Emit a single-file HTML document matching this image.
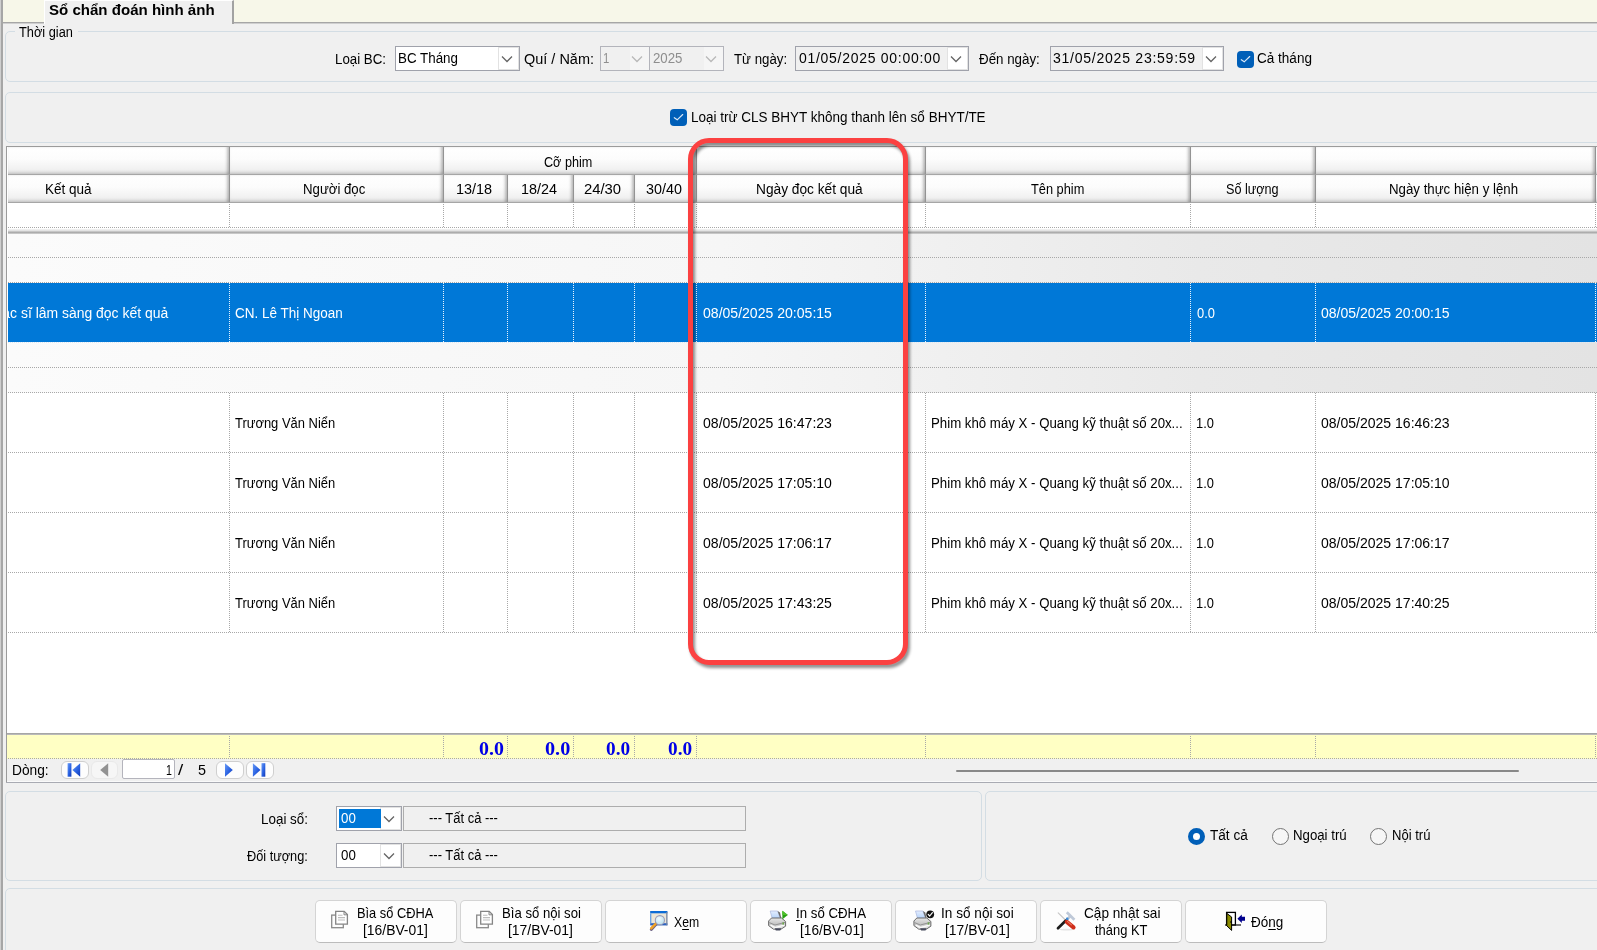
<!DOCTYPE html>
<html lang="vi">
<head>
<meta charset="utf-8">
<title>Sổ chẩn đoán hình ảnh</title>
<style>
*{box-sizing:border-box;margin:0;padding:0}
html,body{width:1597px;height:950px;overflow:hidden;background:#f0f0f0}
body{position:relative;font-family:"Liberation Sans",sans-serif;font-size:15.5px;color:#000;line-height:18px}
.a{position:absolute}
.t{position:absolute;white-space:nowrap;line-height:18px;height:18px;transform-origin:0 50%}
.gb{position:absolute;border:1px solid #d3dde4;border-radius:5px}
.cb{position:absolute;background:#fff;border:1px solid #a0a2ab}
.cb.dis{background:#f0f0f0;border-color:#b3b4bb}
.cb .btn{position:absolute;right:0;top:0;bottom:0;width:21px;background:#fff;border:1px solid #e2e2e2}
.cb.dis .btn{background:#f5f5f5;border:0;width:19px}
.cb svg{position:absolute;right:6px;top:8px}
.chk{position:absolute;width:16.5px;height:16.5px;border-radius:4px;background:#005fb8}
.hl{position:absolute;left:8px;right:0;height:1px;background:repeating-linear-gradient(90deg,#a8a8a8 0 1px,transparent 1px 2px)}
.vl{position:absolute;width:1px;background:repeating-linear-gradient(180deg,#a8a8a8 0 1px,transparent 1px 2px)}
.vl.w{background:repeating-linear-gradient(180deg,#e8f2fb 0 1px,transparent 1px 2px)}
.hdr{position:absolute;height:28px;background:linear-gradient(#fff 0,#fcfcfc 45%,#ececec 100%);border-right:1px solid #939393;border-bottom:1px solid #a6a6a6;box-shadow:inset -3px 0 3px -1px rgba(0,0,0,.25),inset 0 -3px 3px -1px rgba(0,0,0,.12)}
.grp{position:absolute;left:8px;right:0;background:linear-gradient(90deg,#fbfbfb 0,#f6f6f6 45%,#e9e9e9 75%,#e3e3e3 100%)}
.tot{position:absolute;font-family:"Liberation Serif",serif;font-weight:bold;font-size:18px;color:#0000e6;line-height:20px;height:20px;white-space:nowrap;transform-origin:0 50%}
.nb{position:absolute;top:761px;width:28px;height:18px;border:1px solid #cfcfcf;border-radius:6px;background:#fdfdfd;overflow:hidden}
.nb svg{position:absolute;left:0;top:0}
.rd{position:absolute;width:17px;height:17px;border-radius:50%;border:1.5px solid #757575;background:#f6f6f6}
.rd.on{border:5px solid #005fb8;background:#fff}
.bt{position:absolute;top:900px;width:142px;height:43px;background:#fdfdfd;border:1px solid #d4d4d4;border-bottom-color:#bcbcbc;border-radius:5px}
u{text-decoration:underline;text-underline-offset:2px}
</style>
</head>
<body>
<div class="a" style="left:0;top:0;width:3px;height:950px;background:#a6a6a6"></div>
<div class="a" style="left:0;top:0;width:1px;height:950px;background:#cfcfcf"></div>
<div class="a" style="left:3px;top:0;width:1594px;height:22px;background:#f7f7e9"></div>
<div class="a" style="left:3px;top:22px;width:1594px;height:2px;background:linear-gradient(#a6a6a6 50%,#cfcfcf 50%)"></div>
<div class="a" style="left:44px;top:0;width:190px;height:24px;background:#f0f0f0;border-top:1px solid #fff;border-left:1px solid #fff;border-right:2px solid #a2a2a2"></div>
<div class="t" style="left:49.3px;top:1.4px;transform:scaleX(0.9713);font-weight:bold">Sổ chẩn đoán hình ảnh</div>
<div class="gb" style="left:5px;top:31px;width:1620px;height:51px"></div>
<div class="a" style="left:15px;top:26px;width:63px;height:12px;background:#f0f0f0"></div>
<div class="t" style="left:19.4px;top:22.9px;transform:scaleX(0.8253);">Thời gian</div>
<div class="t" style="left:335.3px;top:50.0px;transform:scaleX(0.8585);">Loại BC:</div>
<div class="cb" style="left:395px;top:46px;width:125px;height:25px"><div class="btn"></div><svg width="12" height="8" viewBox="0 0 12 8"><path d="M1 1.5 L6 6.5 L11 1.5" fill="none" stroke="#646464" stroke-width="1.25"/></svg></div>
<div class="t" style="left:398.2px;top:48.9px;transform:scaleX(0.8623);">BC Tháng</div>
<div class="t" style="left:524.2px;top:50.0px;transform:scaleX(0.9335);">Quí / Năm:</div>
<div class="cb dis" style="left:600px;top:46px;width:50px;height:25px"><div class="btn"></div><svg width="12" height="8" viewBox="0 0 12 8"><path d="M1 1.5 L6 6.5 L11 1.5" fill="none" stroke="#b8b8b8" stroke-width="1.25"/></svg></div>
<div class="t" style="left:603.2px;top:48.9px;transform:scaleX(0.7346);color:#8e8e8e">1</div>
<div class="cb dis" style="left:649px;top:46px;width:75px;height:25px"><div class="btn"></div><svg width="12" height="8" viewBox="0 0 12 8"><path d="M1 1.5 L6 6.5 L11 1.5" fill="none" stroke="#b8b8b8" stroke-width="1.25"/></svg></div>
<div class="t" style="left:652.5px;top:48.9px;transform:scaleX(0.8555);color:#8e8e8e">2025</div>
<div class="t" style="left:734.0px;top:50.0px;transform:scaleX(0.8557);">Từ ngày:</div>
<div class="cb" style="left:795px;top:46px;width:174px;height:25px;background:#f0f0f0"><div class="btn"></div><svg width="12" height="8" viewBox="0 0 12 8"><path d="M1 1.5 L6 6.5 L11 1.5" fill="none" stroke="#646464" stroke-width="1.25"/></svg></div>
<div class="t" style="left:799.0px;top:49.1px;transform:scaleX(0.9027);letter-spacing:.8px">01/05/2025 00:00:00</div>
<div class="t" style="left:979.0px;top:50.0px;transform:scaleX(0.8603);">Đến ngày:</div>
<div class="cb" style="left:1050px;top:46px;width:174px;height:25px;background:#f0f0f0"><div class="btn"></div><svg width="12" height="8" viewBox="0 0 12 8"><path d="M1 1.5 L6 6.5 L11 1.5" fill="none" stroke="#646464" stroke-width="1.25"/></svg></div>
<div class="t" style="left:1053.2px;top:49.1px;transform:scaleX(0.9079);letter-spacing:.8px">31/05/2025 23:59:59</div>
<div class="chk" style="left:1237px;top:51px"><svg width="16" height="16" viewBox="0 0 16 16"><path d="M4.3 8.7 L7.2 10.8 L12.7 5.5" fill="none" stroke="#d9e8f7" stroke-width="1.15" stroke-linecap="round" stroke-linejoin="round"/></svg></div>
<div class="t" style="left:1257.2px;top:48.9px;transform:scaleX(0.8733);">Cả tháng</div>
<div class="gb" style="left:5px;top:92px;width:1620px;height:51px"></div>
<div class="chk" style="left:670px;top:109px"><svg width="16" height="16" viewBox="0 0 16 16"><path d="M4.3 8.7 L7.2 10.8 L12.7 5.5" fill="none" stroke="#d9e8f7" stroke-width="1.15" stroke-linecap="round" stroke-linejoin="round"/></svg></div>
<div class="t" style="left:690.7px;top:107.9px;transform:scaleX(0.8708);">Loại trừ CLS BHYT không thanh lên sổ BHYT/TE</div>
<div class="a" style="left:7px;top:147px;width:1590px;height:587px;background:#fff"></div>
<div class="a" style="left:6px;top:146px;width:1591px;height:1px;background:#9b9b9b"></div>
<div class="a" style="left:6px;top:146px;width:1px;height:637px;background:#9b9b9b"></div>
<div class="hdr" style="left:8px;top:147px;width:222px"></div>
<div class="hdr" style="left:230px;top:147px;width:214px"></div>
<div class="hdr" style="left:444px;top:147px;width:253px"></div>
<div class="hdr" style="left:697px;top:147px;width:229px"></div>
<div class="hdr" style="left:926px;top:147px;width:265px"></div>
<div class="hdr" style="left:1191px;top:147px;width:125px"></div>
<div class="hdr" style="left:1316px;top:147px;width:280px"></div>
<div class="hdr" style="left:1596px;top:147px;width:105px"></div>
<div class="hdr" style="left:8px;top:175px;width:222px"></div>
<div class="hdr" style="left:230px;top:175px;width:214px"></div>
<div class="hdr" style="left:444px;top:175px;width:64px"></div>
<div class="hdr" style="left:508px;top:175px;width:66px"></div>
<div class="hdr" style="left:574px;top:175px;width:61px"></div>
<div class="hdr" style="left:635px;top:175px;width:62px"></div>
<div class="hdr" style="left:697px;top:175px;width:229px"></div>
<div class="hdr" style="left:926px;top:175px;width:265px"></div>
<div class="hdr" style="left:1191px;top:175px;width:125px"></div>
<div class="hdr" style="left:1316px;top:175px;width:280px"></div>
<div class="hdr" style="left:1596px;top:175px;width:105px"></div>
<div class="t" style="left:544.0px;top:152.8px;transform:scaleX(0.8150);">Cỡ phim</div>
<div class="t" style="left:45.2px;top:180.1px;transform:scaleX(0.8720);">Kết quả</div>
<div class="t" style="left:302.9px;top:180.1px;transform:scaleX(0.8521);">Người đọc</div>
<div class="t" style="left:455.9px;top:180.1px;transform:scaleX(0.9312);">13/18</div>
<div class="t" style="left:521.4px;top:180.1px;transform:scaleX(0.9279);">18/24</div>
<div class="t" style="left:584.2px;top:180.1px;transform:scaleX(0.9570);">24/30</div>
<div class="t" style="left:646.4px;top:180.1px;transform:scaleX(0.9253);">30/40</div>
<div class="t" style="left:756.4px;top:180.1px;transform:scaleX(0.8844);">Ngày đọc kết quả</div>
<div class="t" style="left:1031.1px;top:180.1px;transform:scaleX(0.8248);">Tên phim</div>
<div class="t" style="left:1226.4px;top:180.1px;transform:scaleX(0.8166);">Số lượng</div>
<div class="t" style="left:1389.4px;top:180.1px;transform:scaleX(0.8554);">Ngày thực hiện y lệnh</div>
<div class="vl" style="left:229px;top:204px;height:24px"></div>
<div class="vl" style="left:443px;top:204px;height:24px"></div>
<div class="vl" style="left:507px;top:204px;height:24px"></div>
<div class="vl" style="left:573px;top:204px;height:24px"></div>
<div class="vl" style="left:634px;top:204px;height:24px"></div>
<div class="vl" style="left:696px;top:204px;height:24px"></div>
<div class="vl" style="left:925px;top:204px;height:24px"></div>
<div class="vl" style="left:1190px;top:204px;height:24px"></div>
<div class="vl" style="left:1315px;top:204px;height:24px"></div>
<div class="vl" style="left:1595px;top:204px;height:24px"></div>
<div class="hl" style="top:227px"></div>
<div class="a" style="left:8px;top:229px;width:1589px;height:5px;background:linear-gradient(#f4f4f4 0,#e4e4e4 30%,#b4b4b4 62%,#a8a8a8 75%,#dcdcdc 100%)"></div>
<div class="grp" style="top:234px;height:49px"></div>
<div class="hl" style="top:257px"></div>
<div class="a" style="left:8px;top:283px;width:1589px;height:59px;background:#0078d7"></div>
<div class="hl" style="top:282px"></div>
<div class="vl w" style="left:229px;top:283px;height:59px"></div>
<div class="vl w" style="left:443px;top:283px;height:59px"></div>
<div class="vl w" style="left:507px;top:283px;height:59px"></div>
<div class="vl w" style="left:573px;top:283px;height:59px"></div>
<div class="vl w" style="left:634px;top:283px;height:59px"></div>
<div class="vl w" style="left:696px;top:283px;height:59px"></div>
<div class="vl w" style="left:925px;top:283px;height:59px"></div>
<div class="vl w" style="left:1190px;top:283px;height:59px"></div>
<div class="vl w" style="left:1315px;top:283px;height:59px"></div>
<div class="vl w" style="left:1595px;top:283px;height:59px"></div>
<div class="grp" style="top:342px;height:51px"></div>
<div class="hl" style="top:342px;background:repeating-linear-gradient(90deg,#dbe9f6 0 1px,transparent 1px 2px)"></div>
<div class="hl" style="top:367px"></div>
<div class="hl" style="top:392px"></div>
<div class="vl" style="left:229px;top:393px;height:240px"></div>
<div class="vl" style="left:443px;top:393px;height:240px"></div>
<div class="vl" style="left:507px;top:393px;height:240px"></div>
<div class="vl" style="left:573px;top:393px;height:240px"></div>
<div class="vl" style="left:634px;top:393px;height:240px"></div>
<div class="vl" style="left:696px;top:393px;height:240px"></div>
<div class="vl" style="left:925px;top:393px;height:240px"></div>
<div class="vl" style="left:1190px;top:393px;height:240px"></div>
<div class="vl" style="left:1315px;top:393px;height:240px"></div>
<div class="vl" style="left:1595px;top:393px;height:240px"></div>
<div class="hl" style="top:452px"></div>
<div class="hl" style="top:512px"></div>
<div class="hl" style="top:572px"></div>
<div class="hl" style="top:632px"></div>
<div class="a" style="left:7px;top:290px;width:222px;height:40px;overflow:hidden">
<div class="t" style="left:-13.9px;top:14.1px;transform:scaleX(0.8998);color:#fff">Bác sĩ lâm sàng đọc kết quả</div>
</div>
<div class="t" style="left:234.5px;top:304.1px;transform:scaleX(0.8701);color:#fff">CN. Lê Thị Ngoan</div>
<div class="t" style="left:702.6px;top:304.1px;transform:scaleX(0.9064);color:#fff">08/05/2025 20:05:15</div>
<div class="t" style="left:1197.0px;top:304.1px;transform:scaleX(0.8301);color:#fff">0.0</div>
<div class="t" style="left:1321.2px;top:304.1px;transform:scaleX(0.9042);color:#fff">08/05/2025 20:00:15</div>
<div class="t" style="left:235.4px;top:414.1px;transform:scaleX(0.8357);">Trương Văn Niển</div>
<div class="t" style="left:702.6px;top:414.1px;transform:scaleX(0.9064);">08/05/2025 16:47:23</div>
<div class="t" style="left:931.4px;top:414.1px;transform:scaleX(0.8541);">Phim khô máy X - Quang kỹ thuật số 20x...</div>
<div class="t" style="left:1196.2px;top:414.1px;transform:scaleX(0.8301);">1.0</div>
<div class="t" style="left:1321.2px;top:414.1px;transform:scaleX(0.9042);">08/05/2025 16:46:23</div>
<div class="t" style="left:235.4px;top:474.1px;transform:scaleX(0.8357);">Trương Văn Niển</div>
<div class="t" style="left:702.6px;top:474.1px;transform:scaleX(0.9064);">08/05/2025 17:05:10</div>
<div class="t" style="left:931.4px;top:474.1px;transform:scaleX(0.8541);">Phim khô máy X - Quang kỹ thuật số 20x...</div>
<div class="t" style="left:1196.2px;top:474.1px;transform:scaleX(0.8301);">1.0</div>
<div class="t" style="left:1321.2px;top:474.1px;transform:scaleX(0.9042);">08/05/2025 17:05:10</div>
<div class="t" style="left:235.4px;top:534.1px;transform:scaleX(0.8357);">Trương Văn Niển</div>
<div class="t" style="left:702.6px;top:534.1px;transform:scaleX(0.9064);">08/05/2025 17:06:17</div>
<div class="t" style="left:931.4px;top:534.1px;transform:scaleX(0.8541);">Phim khô máy X - Quang kỹ thuật số 20x...</div>
<div class="t" style="left:1196.2px;top:534.1px;transform:scaleX(0.8301);">1.0</div>
<div class="t" style="left:1321.2px;top:534.1px;transform:scaleX(0.9042);">08/05/2025 17:06:17</div>
<div class="t" style="left:235.4px;top:594.1px;transform:scaleX(0.8357);">Trương Văn Niển</div>
<div class="t" style="left:702.6px;top:594.1px;transform:scaleX(0.9064);">08/05/2025 17:43:25</div>
<div class="t" style="left:931.4px;top:594.1px;transform:scaleX(0.8541);">Phim khô máy X - Quang kỹ thuật số 20x...</div>
<div class="t" style="left:1196.2px;top:594.1px;transform:scaleX(0.8301);">1.0</div>
<div class="t" style="left:1321.2px;top:594.1px;transform:scaleX(0.9042);">08/05/2025 17:40:25</div>
<div class="a" style="left:7px;top:733px;width:1590px;height:2px;background:linear-gradient(#9c9c9c,#c4c4c4)"></div>
<div class="a" style="left:7px;top:735px;width:1590px;height:24px;background:#ffffc4"></div>
<div class="vl" style="left:229px;top:736px;height:22px"></div>
<div class="vl" style="left:443px;top:736px;height:22px"></div>
<div class="vl" style="left:507px;top:736px;height:22px"></div>
<div class="vl" style="left:573px;top:736px;height:22px"></div>
<div class="vl" style="left:634px;top:736px;height:22px"></div>
<div class="vl" style="left:696px;top:736px;height:22px"></div>
<div class="vl" style="left:925px;top:736px;height:22px"></div>
<div class="vl" style="left:1190px;top:736px;height:22px"></div>
<div class="vl" style="left:1315px;top:736px;height:22px"></div>
<div class="vl" style="left:1595px;top:736px;height:22px"></div>
<div class="hl" style="top:758px"></div>
<div class="tot" style="left:478.5px;top:738.5px;transform:scaleX(1.1066);">0.0</div>
<div class="tot" style="left:545.4px;top:738.5px;transform:scaleX(1.1236);">0.0</div>
<div class="tot" style="left:605.5px;top:738.5px;transform:scaleX(1.0711);">0.0</div>
<div class="tot" style="left:667.5px;top:738.5px;transform:scaleX(1.0711);">0.0</div>
<div class="t" style="left:11.9px;top:761.0px;transform:scaleX(0.8866);">Dòng:</div>
<div class="nb" style="left:61px"><svg width="28" height="18" viewBox="0 0 28 18" style="left:-1px;top:-1px"><defs><linearGradient id="g1" x1="0" y1="0" x2="1" y2="1"><stop offset="0" stop-color="#6a9cf6"/><stop offset=".55" stop-color="#2a62e2"/><stop offset="1" stop-color="#1038b4"/></linearGradient></defs><rect x="6.6" y="2.2" width="3.8" height="13.5" fill="url(#g1)"/><path d="M19.2 2.2 L19.2 15.7 L11.4 9 Z" fill="url(#g1)"/></svg></div>
<div class="nb" style="left:91px;width:27px;border-color:#e9e9e9;background:#f6f6f6"><svg width="28" height="18" viewBox="0 0 28 18" style="left:-1px;top:-1px"><defs><linearGradient id="g2" x1="0" y1="0" x2="1" y2="1"><stop offset="0" stop-color="#6a9cf6"/><stop offset=".55" stop-color="#2a62e2"/><stop offset="1" stop-color="#1038b4"/></linearGradient></defs><path d="M17.2 2.2 L17.2 15.7 L9.2 9 Z" fill="#929292"/></svg></div>
<div class="a" style="left:122px;top:759px;width:53px;height:20px;background:#fff;border:1px solid #b4b4bc;border-radius:2px"></div>
<div class="t" style="left:165.9px;top:760.9px;transform:scaleX(0.6842);">1</div>
<div class="t" style="left:178.4px;top:760.9px;transform:scaleX(1.2058);">/</div>
<div class="t" style="left:198.4px;top:760.9px;transform:scaleX(0.9275);">5</div>
<div class="nb" style="left:216px"><svg width="28" height="18" viewBox="0 0 28 18" style="left:-1px;top:-1px"><defs><linearGradient id="g3" x1="0" y1="0" x2="1" y2="1"><stop offset="0" stop-color="#6a9cf6"/><stop offset=".55" stop-color="#2a62e2"/><stop offset="1" stop-color="#1038b4"/></linearGradient></defs><path d="M9 2.2 L9 15.7 L16.8 9 Z" fill="url(#g3)"/></svg></div>
<div class="nb" style="left:246px"><svg width="28" height="18" viewBox="0 0 28 18" style="left:-1px;top:-1px"><defs><linearGradient id="g4" x1="0" y1="0" x2="1" y2="1"><stop offset="0" stop-color="#6a9cf6"/><stop offset=".55" stop-color="#2a62e2"/><stop offset="1" stop-color="#1038b4"/></linearGradient></defs><path d="M6.9 2.2 L6.9 15.7 L14.5 9 Z" fill="url(#g4)"/><rect x="15.5" y="2.2" width="3.8" height="13.5" fill="url(#g4)"/></svg></div>
<div class="a" style="left:956px;top:770px;width:563px;height:2px;background:#888;border-radius:1px"></div>
<div class="a" style="left:7px;top:781px;width:1590px;height:1px;background:#fafafa"></div>
<div class="a" style="left:6px;top:782px;width:1591px;height:1px;background:#a9abb3"></div>
<div class="gb" style="left:5px;top:791px;width:977px;height:90px"></div>
<div class="gb" style="left:985px;top:791px;width:640px;height:90px"></div>
<div class="gb" style="left:5px;top:888px;width:1620px;height:90px"></div>
<div class="t" style="left:261.2px;top:809.7px;transform:scaleX(0.8652);">Loại sổ:</div>
<div class="cb" style="left:336px;top:806px;width:66px;height:25px"><div class="btn"></div><svg width="12" height="8" viewBox="0 0 12 8"><path d="M1 1.5 L6 6.5 L11 1.5" fill="none" stroke="#646464" stroke-width="1.25"/></svg><div class="a" style="left:2px;top:2px;width:42px;height:19px;background:#0078d7"></div></div>
<div class="t" style="left:340.5px;top:808.9px;transform:scaleX(0.8580);color:#fff">00</div>
<div class="a" style="left:403px;top:806px;width:343px;height:25px;background:#f0f0f0;border:1px solid #adadad"></div>
<div class="t" style="left:429.1px;top:808.9px;transform:scaleX(0.8364);">--- Tất cả ---</div>
<div class="t" style="left:246.5px;top:847.3px;transform:scaleX(0.8220);">Đối tượng:</div>
<div class="cb" style="left:336px;top:843px;width:66px;height:25px"><div class="btn"></div><svg width="12" height="8" viewBox="0 0 12 8"><path d="M1 1.5 L6 6.5 L11 1.5" fill="none" stroke="#646464" stroke-width="1.25"/></svg></div>
<div class="t" style="left:340.5px;top:846.1px;transform:scaleX(0.8580);">00</div>
<div class="a" style="left:403px;top:843px;width:343px;height:25px;background:#f0f0f0;border:1px solid #adadad"></div>
<div class="t" style="left:429.1px;top:846.1px;transform:scaleX(0.8364);">--- Tất cả ---</div>
<div class="rd on" style="left:1188px;top:828px"></div>
<div class="t" style="left:1210.1px;top:825.9px;transform:scaleX(0.8775);">Tất cả</div>
<div class="rd" style="left:1272px;top:828px"></div>
<div class="t" style="left:1293.3px;top:825.9px;transform:scaleX(0.8534);">Ngoại trú</div>
<div class="rd" style="left:1370px;top:828px"></div>
<div class="t" style="left:1392.2px;top:825.9px;transform:scaleX(0.8417);">Nội trú</div>
<div class="bt" style="left:315px"></div>
<div class="bt" style="left:460px"></div>
<div class="bt" style="left:605px"></div>
<div class="bt" style="left:750px"></div>
<div class="bt" style="left:895px"></div>
<div class="bt" style="left:1040px"></div>
<div class="bt" style="left:1185px"></div>
<svg class="a" style="left:0;top:895px" width="1597" height="55" viewBox="0 895 1597 55">
<defs>
<linearGradient id="pp" x1="0" y1="0" x2="0" y2="1"><stop offset="0" stop-color="#e4eeff"/><stop offset="1" stop-color="#b4d2fa"/></linearGradient>
<linearGradient id="pb" x1="0" y1="0" x2="0" y2="1"><stop offset="0" stop-color="#e6e6e6"/><stop offset=".55" stop-color="#c4c4c4"/><stop offset="1" stop-color="#efefef"/></linearGradient>
<radialGradient id="lens" cx=".4" cy=".35" r=".7"><stop offset="0" stop-color="#f4fcff"/><stop offset="1" stop-color="#b4dcea"/></radialGradient>
<linearGradient id="rh" x1="0" y1="0" x2="1" y2="0"><stop offset="0" stop-color="#f07a60"/><stop offset=".5" stop-color="#d8301c"/><stop offset="1" stop-color="#b02010"/></linearGradient>
<g id="copyic">
<rect x="331.7" y="915.1" width="11.6" height="12.6" fill="#fdfdfd" stroke="#8a8a8a" stroke-width="1.3"/>
<path d="M335.7 911.3 H344.2 L347.4 914.5 V924.2 H335.7 Z" fill="#fff" stroke="#858585" stroke-width="1.3"/>
<path d="M344 911.5 V914.8 H347.2" fill="none" stroke="#858585" stroke-width="1"/>
<path d="M338 915.2 H342.5 M338 917.6 H345 M338 920 H345" stroke="#bdbdbd" stroke-width="1.1"/>
</g>
<g id="printer">
<path d="M770.2 911 L777.6 911 L780 917.8 L772.2 918.4 Z" fill="url(#pp)" stroke="#a9b6dc" stroke-width=".7"/>
<path d="M777.6 911 L780 912.6 L781.4 918.6 L780 917.8 Z" fill="#6a6a6a"/>
<path d="M768.6 921 L771.5 918 L781.5 918 L785.6 921.5 L785.6 926.2 L781 929.2 L773.5 929.2 L768.6 925.6 Z" fill="url(#pb)" stroke="#5e5e5e" stroke-width=".9"/>
<path d="M769.3 922.6 L775 925 L785 922.4" fill="none" stroke="#8a8a8a" stroke-width=".9"/>
<path d="M770.5 925.2 L775.2 927.6 L784.5 925" fill="none" stroke="#fafafa" stroke-width="1.3"/>
<path d="M774.8 928.2 L781.4 928.2 L780.2 930.6 L775.8 930.6 Z" fill="#474a5c"/>
<rect x="782.4" y="922.4" width="1.6" height="2.2" fill="#6aa84a"/>
</g>
</defs>
<use href="#copyic"/>
<use href="#copyic" x="145"/>
<!-- preview (window + magnifier) -->
<rect x="650.2" y="911" width="17.2" height="14.3" fill="#ece6d6"/>
<rect x="650.2" y="911" width="17.2" height="2.3" fill="#0b6cd6"/>
<rect x="650.2" y="923.2" width="17.2" height="2.2" fill="#2c62c0"/>
<rect x="650.2" y="913.4" width="1.1" height="10" fill="#4d94e6"/>
<rect x="666.2" y="912" width="1.3" height="13.3" fill="#7687a6"/>
<path d="M656.4 923.6 L651.4 929.2" stroke="#6e6486" stroke-width="3.2" stroke-linecap="round"/>
<path d="M656.4 923 L651.2 928.4" stroke="#f2a324" stroke-width="2.4" stroke-linecap="round"/>
<circle cx="659.9" cy="920.2" r="4.6" fill="url(#lens)" stroke="#9a9cb8" stroke-width="1.1"/>
<!-- printer + green arrow -->
<use href="#printer"/>
<path d="M782.4 910.8 L787.8 915 L782.4 919.2 Z" fill="#27a012"/>
<path d="M782.4 910.8 L787.8 915 L782.4 915 Z" fill="#4cc02a"/>
<!-- printer + check -->
<use href="#printer" x="145.3"/>
<circle cx="930.2" cy="914.3" r="3.9" fill="#111"/>
<path d="M928.2 914.4 L929.7 916 L932.4 912.6" fill="none" stroke="#fff" stroke-width="1.2" stroke-linecap="round" stroke-linejoin="round"/>
<!-- tools -->
<ellipse cx="1066.5" cy="929.6" rx="7.5" ry="0.9" fill="#e4e4e4"/>
<path d="M1058.2 912.8 L1065.4 920" stroke="#c6c6c6" stroke-width="1.1" stroke-linecap="round"/>
<path d="M1066.8 912.2 L1074.4 919.8" stroke="#bfc9d8" stroke-width="2.7"/>
<path d="M1070.6 916 L1067.4 919" stroke="#bfc9d8" stroke-width="2.4"/>
<path d="M1065.6 920.8 L1058 928.2" stroke="#1c1c1c" stroke-width="2.7" stroke-linecap="round"/>
<circle cx="1067.2" cy="919" r="1.4" fill="#3b8bd8"/>
<path d="M1066.8 921.9 L1073.5 927.4" stroke="#cf2e1b" stroke-width="4.2" stroke-linecap="round"/>
<path d="M1067.4 921.4 L1071.4 924.8" stroke="#ea7a62" stroke-width="1.1" stroke-linecap="round"/>
<!-- door -->
<rect x="1226.6" y="912.4" width="8.8" height="12.6" fill="#fff" stroke="#000" stroke-width="1.3"/>
<path d="M1225 925 H1241" stroke="#111" stroke-width="1.2"/>
<path d="M1226.8 913.4 L1231.6 917 L1231.6 930.4 L1226.8 925.8 Z" fill="#8c8c00" stroke="#000" stroke-width="1"/>
<path d="M1230 922 H1231.6" stroke="#000" stroke-width="1"/>
<path d="M1237.4 918.7 L1241.8 914.4 L1241.8 916.8 L1245 916.8 L1245 920.7 L1241.8 920.7 L1241.8 923 Z" fill="#00008c"/>
</svg>

<div class="t" style="left:357.0px;top:904.2px;font-size:14.3px;transform:scaleX(0.8974);">Bìa sổ CĐHA</div>
<div class="t" style="left:363.3px;top:921.0px;font-size:14.3px;transform:scaleX(0.9701);">[16/BV-01]</div>
<div class="t" style="left:501.5px;top:904.2px;font-size:14.3px;transform:scaleX(0.9195);">Bìa sổ nội soi</div>
<div class="t" style="left:508.2px;top:921.0px;font-size:14.3px;transform:scaleX(0.9729);">[17/BV-01]</div>
<div class="t" style="left:674.2px;top:912.6px;font-size:14.3px;transform:scaleX(0.8531);">X<u>e</u>m</div>
<div class="t" style="left:795.7px;top:904.2px;font-size:14.3px;transform:scaleX(0.9272);"><u>I</u>n sổ CĐHA</div>
<div class="t" style="left:799.5px;top:921.0px;font-size:14.3px;transform:scaleX(0.9563);">[16/BV-01]</div>
<div class="t" style="left:940.7px;top:904.2px;font-size:14.3px;transform:scaleX(0.9524);">In sổ nội soi</div>
<div class="t" style="left:944.8px;top:921.0px;font-size:14.3px;transform:scaleX(0.9701);">[17/BV-01]</div>
<div class="t" style="left:1084.4px;top:904.2px;font-size:14.3px;transform:scaleX(0.9526);">Cập nhật sai</div>
<div class="t" style="left:1094.8px;top:921.0px;font-size:14.3px;transform:scaleX(0.9047);">tháng KT</div>
<div class="t" style="left:1251.0px;top:912.6px;font-size:14.3px;transform:scaleX(0.9448);">Đó<u>n</u>g</div>
<div class="a" style="left:688px;top:138px;width:220px;height:527px;border:5px solid #fb4141;border-radius:21px;filter:drop-shadow(2px 3px 1.5px rgba(0,0,0,.44))"></div>
</body>
</html>
